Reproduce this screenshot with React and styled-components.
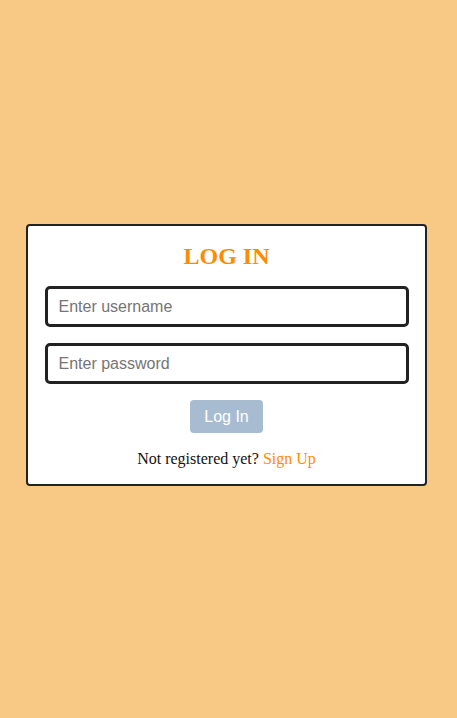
import React from "react";
import styled, { createGlobalStyle } from "styled-components";

const Global = createGlobalStyle`
  html, body { margin: 0; padding: 0; }
  body { background: #f8c885; font-family: "Liberation Serif", "Times New Roman", serif; }
`;

const Page = styled.div`
  min-height: 718px;
  display: flex;
  align-items: center;
  justify-content: flex-start;
  padding-left: 26px;
  box-sizing: border-box;
`;

const Card = styled.form`
  width: 401px;
  box-sizing: border-box;
  margin-top: -8px;
  background: #fff;
  border: 2px solid #222;
  border-radius: 4px;
  padding: 16px 16px 14px 16px;
  display: flex;
  flex-direction: column;
  align-items: center;
`;

const Title = styled.h1`
  margin: 0 0 16px;
  font-family: "Liberation Serif", serif;
  font-weight: bold;
  font-size: 24px;
  line-height: 28px;
  color: #ff8c00;
`;

const Input = styled.input`
  width: 364px;
  height: 41px;
  box-sizing: border-box;
  border: 3px solid #222;
  border-radius: 5px;
  padding: 0 11px;
  margin-bottom: 16px;
  font-family: "Liberation Sans", Arial, sans-serif;
  font-size: 16px;
  outline: none;
  &::placeholder { color: #757575; }
`;

const Button = styled.button`
  width: 73px;
  height: 33px;
  border: none;
  border-radius: 4px;
  background: #a7bcd1;
  color: #fff;
  font-family: "Liberation Sans", Arial, sans-serif;
  font-size: 16px;
  margin-bottom: 15px;
`;

const Footer = styled.p`
  margin: 0;
  font-size: 16px;
  line-height: 22px;
  color: #111;
`;

const Link = styled.a`
  color: #ff8c00;
  text-decoration: none;
`;

export default function App() {
  return (
    <>
      <Global />
      <Page>
        <Card onSubmit={(e) => e.preventDefault()}>
          <Title>LOG IN</Title>
          <Input placeholder="Enter username" />
          <Input type="password" placeholder="Enter password" />
          <Button type="submit">Log In</Button>
          <Footer>
            Not registered yet? <Link href="#">Sign Up</Link>
          </Footer>
        </Card>
      </Page>
    </>
  );
}
